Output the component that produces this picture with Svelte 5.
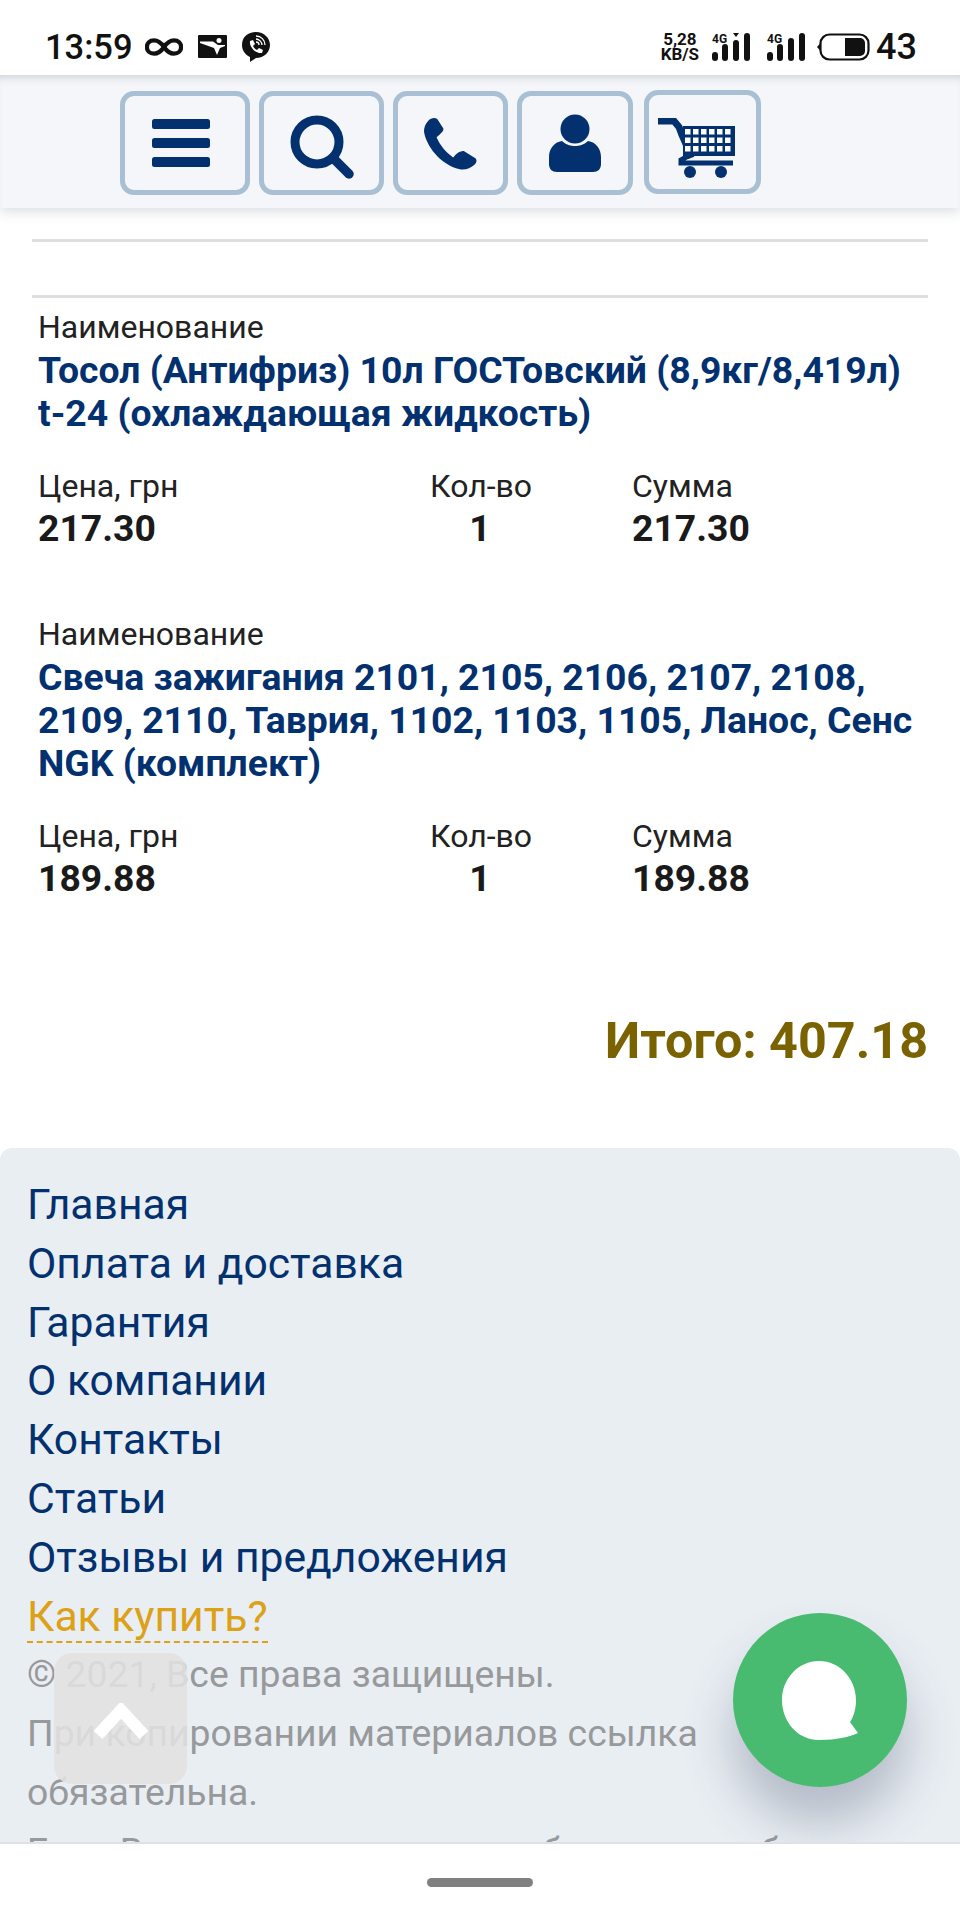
<script lang="ts">
  const items = [
    { name: "Тосол (Антифриз) 10л ГОСТовский (8,9кг/8,419л) t-24 (охлаждающая жидкость)", price: "217.30", qty: 1, sum: "217.30" },
    { name: "Свеча зажигания 2101, 2105, 2106, 2107, 2108, 2109, 2110, Таврия, 1102, 1103, 1105, Ланос, Сенс NGK (комплект)", price: "189.88", qty: 1, sum: "189.88" },
  ];
  const links = ["Главная", "Оплата и доставка", "Гарантия", "О компании", "Контакты", "Статьи", "Отзывы и предложения"];
  const cartCells = [0, 1, 2, 3, 4, 5];
</script>

<div class="screen">
  <div class="status">
    <div class="status-left">
      <span class="time">13:59</span>
      <svg width="38" height="20" viewBox="0 0 40 20"><path d="M20 10C16 4 13 3 9.500 3 5 3 2 6 2 10s3 7 7.500 7c3.500 0 6.500-1 10.500-7s7-7 10.500-7C35 3 38 6 38 10s-3 7-7.500 7c-3.500 0-6.500-1-10.500-7z" fill="none" stroke="#111" stroke-width="4.500"/></svg>
      <svg width="29" height="23" viewBox="0 0 29 23"><rect width="29" height="23" rx="1" fill="#111"/><path d="M2 6.500h13l5 3.500h7v1l-5 2-3 7-3-7-14-5z" fill="#fff"/><circle cx="21" cy="5.500" r="2.500" fill="#fff"/></svg>
      <svg width="28" height="30" viewBox="0 0 28 30"><path d="M14 0C6 0 0 5 0 13c0 6 4 10 8 12l0 5 6-4c8 0 14-6 14-13S22 0 14 0z" fill="#111"/><path d="M8 9l3-1 2 4-2 2c1 2 2 3 4 4l2-2 4 2-1 3c-6 1-13-6-12-12z" fill="#fff"/><path d="M14 4c5 0 9 4 9 9M14 7c3 0 6 3 6 6M14 10c2 0 3 1 3 3" fill="none" stroke="#fff" stroke-width="1.300"/></svg>
    </div>
    <div class="status-right">
      <div class="speed"><span>5,28</span><span>KB/S</span></div>
      {#each [true, false] as arrow}
        <div class="signal">
          <span class="g4">4G</span>
          <svg width="38" height="28" viewBox="0 0 38 28">
            <rect x="0" y="19" width="6" height="9" rx="3" fill="#111"/>
            <rect x="10" y="11" width="6" height="17" rx="3" fill="#111"/>
            <rect x="21" y={arrow ? 7 : 5} width="6" height={arrow ? 21 : 23} rx="3" fill="#111"/>
            <rect x="32" y="0" width="6" height="28" rx="3" fill="#111"/>
            {#if arrow}<path d="M21 0h6l-3 4z" fill="#111"/>{/if}
          </svg>
        </div>
      {/each}
      <svg class="battery" width="53" height="28" viewBox="0 0 53 28"><rect x="3.500" y="1.500" width="48" height="25" rx="9" fill="none" stroke="#111" stroke-width="2.200"/><path d="M0 14l3.500-4v8z" fill="#111"/><path d="M28 5h15a5 5 0 0 1 5 5v8a5 5 0 0 1-5 5H28z" fill="#111"/></svg>
      <span class="level">43</span>
    </div>
  </div>

  <header class="topbar">
    <button class="tool menu" aria-label="Меню">
      <svg width="58" height="48" viewBox="0 0 58 48"><rect width="58" height="10" rx="2.500" fill="#03316f"/><rect y="19" width="58" height="10" rx="2.500" fill="#03316f"/><rect y="38" width="58" height="10" rx="2.500" fill="#03316f"/></svg>
    </button>
    <button class="tool search" aria-label="Поиск">
      <svg width="64" height="64" viewBox="0 0 64 64"><circle cx="27" cy="27" r="22" fill="none" stroke="#03316f" stroke-width="9"/><path d="M43 43l16 16" stroke="#03316f" stroke-width="9.500" stroke-linecap="round"/></svg>
    </button>
    <button class="tool phone" aria-label="Телефон">
      <svg width="53" height="53" viewBox="72 44 160 160"><path d="M85 55C92 47 105 44 112 50L130 78C132 84 128 90 110 105C120 130 140 152 160 166C172 152 182 146 192 147L226 168C232 172 232 180 226 187C212 200 195 205 180 202C120 188 78 130 72 88C72 75 76 65 85 55Z" fill="#03316f"/></svg>
    </button>
    <button class="tool user" aria-label="Профиль">
      <svg width="54" height="58" viewBox="0 0 54 58"><circle cx="27" cy="15" r="14.500" fill="#03316f"/><path d="M14 27c4 4 9 5 13 5s9-1 13-5c8 1 13 8 13 16v7c0 5-3 8-8 8H9c-5 0-8-3-8-8v-7c0-8 5-15 13-16z" fill="#03316f"/></svg>
    </button>
    <button class="tool cart" aria-label="Корзина">
      <svg width="77" height="60" viewBox="0 0 77 60">
        <path d="M0 3h16l5 6 3 8 4 9 5 14" fill="none" stroke="#03316f" stroke-width="7"/>
        <rect x="25" y="8" width="52" height="30" fill="#03316f"/>
        {#each [0, 1, 2] as r}
          {#each cartCells as c}
            <rect x={27 + c * 8} y={11 + r * 8.500} width="5.500" height="5.500" fill="#fff"/>
          {/each}
        {/each}
        <path d="M30 38l-7 4 0 3h52" fill="none" stroke="#03316f" stroke-width="5"/>
        <circle cx="32" cy="54" r="6" fill="#03316f"/>
        <circle cx="63" cy="54" r="6" fill="#03316f"/>
      </svg>
    </button>
  </header>

  <main class="page">
    <div class="rules">
      <hr />
      <hr />
    </div>

    {#each items as item}
      <section class="item">
        <div class="cap">Наименование</div>
        <a class="name" href="#top">{item.name}</a>
        <div class="row">
          <div><div class="cap">Цена, грн</div><b>{item.price}</b></div>
          <div class="qty"><div class="cap">Кол-во</div><b>{item.qty}</b></div>
          <div><div class="cap">Сумма</div><b>{item.sum}</b></div>
        </div>
      </section>
    {/each}

    <div class="total">Итого: 407.18</div>

    <footer class="foot">
      <nav class="links">
        {#each links as link}
          <a href="#top">{link}</a>
        {/each}
        <a class="how" href="#top"><span>Как купить?</span></a>
      </nav>
      <p>© 2021, Все права защищены.</p>
      <p>При копировании материалов ссылка обязательна.</p>
      <p>Если Вы нашли опечатку, сообщите нам об этом.</p>
    </footer>
  </main>

  <div class="navbar"><span class="pill"></span></div>

  <button class="up" aria-label="Наверх">
    <svg width="56" height="36" viewBox="0 0 56 36"><path d="M5 32L28 7l23 25" fill="none" stroke="#fff" stroke-width="12"/></svg>
  </button>
  <button class="chat" aria-label="Чат">
    <svg width="76" height="79" viewBox="0 0 76 79"><path d="M37 0C58 0 74 18 74 39c0 8-2 16-6 22l8 11c-9 4-21 7-39 7C16 79 0 61 0 39 0 18 16 0 37 0z" fill="#fff"/></svg>
  </button>
</div>

<style>
  :global(body) {
    margin: 0;
  }
  .screen {
    position: relative;
    display: flex;
    flex-direction: column;
    width: 960px;
    height: 1920px;
    overflow: hidden;
    background: #fff;
    font-family: Roboto, sans-serif;
    color: #1a1a1a;
  }
  .status {
    position: relative;
    z-index: 3;
    display: flex;
    flex-shrink: 0;
    justify-content: space-between;
    align-items: center;
    height: 75px;
    padding: 18px 43px 0 45px;
    box-sizing: border-box;
    background: #fff;
  }
  .status-left,
  .status-right {
    display: flex;
    align-items: center;
  }
  .status-left {
    gap: 15px;
  }
  .time {
    margin-right: -3px;
    font-size: 34.500px;
    font-weight: 500;
    color: #111;
  }
  .speed {
    display: flex;
    flex-direction: column;
    align-items: center;
    margin-right: 13px;
    font-size: 17px;
    font-weight: 700;
    line-height: 15px;
    color: #111;
  }
  .signal {
    position: relative;
    margin-right: 17px;
  }
  .signal svg {
    display: block;
  }
  .g4 {
    position: absolute;
    left: 0;
    top: -1px;
    font-size: 12px;
    line-height: 14px;
    font-weight: 700;
    color: #111;
  }
  .battery {
    margin-left: -5px;
  }
  .level {
    margin-left: 6px;
    font-size: 36px;
    font-weight: 500;
    color: #111;
  }
  .topbar {
    position: relative;
    z-index: 2;
    display: flex;
    flex-shrink: 0;
    align-items: center;
    gap: 9px;
    height: 133px;
    padding: 3px 0 0 120px;
    box-sizing: border-box;
    background: #f4f6f9;
    box-shadow: 0 3px 12px rgba(60, 70, 90, 0.2), inset 0 8px 8px -6px rgba(60, 70, 90, 0.22);
  }
  .tool {
    display: flex;
    justify-content: center;
    align-items: center;
    height: 104px;
    padding: 0;
    box-sizing: border-box;
    border: 5px solid #a9bfd4;
    border-radius: 14px;
    background: transparent;
  }
  .menu {
    width: 130px;
    padding-right: 9px;
  }
  .search {
    width: 125px;
    padding-top: 8px;
  }
  .phone { width: 115px; }
  .user { width: 116px; }
  .cart {
    width: 117px;
    margin: -2px 0 0 2px;
    padding: 11px 12px 0 0;
  }
  .page {
    flex: 1;
    min-height: 0;
    overflow: hidden;
    background: #fff;
  }
  .rules {
    padding: 31px 32px 0;
  }
  .rules hr {
    height: 3px;
    margin: 0 0 53px;
    border: 0;
    background: #dfdfdf;
  }
  .item {
    padding: 0 32px 0 38px;
    margin-bottom: 64px;
  }
  .item:first-of-type {
    margin-top: -43px;
  }
  .cap {
    font-size: 32px;
    line-height: 38px;
    color: #222;
  }
  .name {
    display: block;
    margin-top: 3px;
    font-size: 37.330px;
    font-weight: 700;
    line-height: 43px;
    color: #03316f;
    text-decoration: none;
  }
  .row {
    display: grid;
    grid-template-columns: 392px 202px 1fr;
    margin-top: 32px;
  }
  .row b {
    display: block;
    font-size: 37.330px;
    line-height: 46px;
    color: #1a1a1a;
  }
  .qty {
    width: 100px;
    text-align: center;
  }
  .qty .cap {
    white-space: nowrap;
  }
  .total {
    margin: 110px 32px 0 0;
    font-size: 50.300px;
    font-weight: 700;
    line-height: 60px;
    color: #7a6200;
    text-align: right;
  }
  .foot {
    margin-top: 77px;
    padding: 27px 27px 0;
    border-radius: 12px 12px 0 0;
    background: #e9eef3;
  }
  .links {
    display: flex;
    flex-direction: column;
  }
  .links a {
    font-size: 42.670px;
    line-height: 58.800px;
    color: #03316f;
    text-decoration: none;
  }
  .links a.how {
    color: #dca117;
  }
  .how span {
    border-bottom: 2px dashed #dca117;
  }
  .foot p {
    margin: 0;
    font-size: 37.330px;
    line-height: 59px;
    color: #98999b;
  }
  .navbar {
    position: relative;
    z-index: 2;
    display: flex;
    flex-shrink: 0;
    justify-content: center;
    align-items: center;
    height: 78px;
    background: #fff;
    border-top: 2px solid #dfe1e6;
    box-sizing: border-box;
  }
  .pill {
    width: 106px;
    height: 9px;
    border-radius: 5px;
    background: #808080;
  }
  .up {
    position: absolute;
    left: 54px;
    top: 1653px;
    display: flex;
    justify-content: center;
    align-items: center;
    width: 133px;
    height: 131px;
    padding: 4px 0 0;
    box-sizing: border-box;
    border: 0;
    border-radius: 18px;
    background: rgba(225, 225, 225, 0.88);
  }
  .chat {
    position: absolute;
    left: 733px;
    top: 1613px;
    display: flex;
    justify-content: center;
    align-items: center;
    width: 174px;
    height: 174px;
    padding: 0;
    box-sizing: border-box;
    border: 0;
    border-radius: 50%;
    background: #48bb70;
    box-shadow: 0 36px 50px rgba(60, 70, 100, 0.3);
  }
</style>
